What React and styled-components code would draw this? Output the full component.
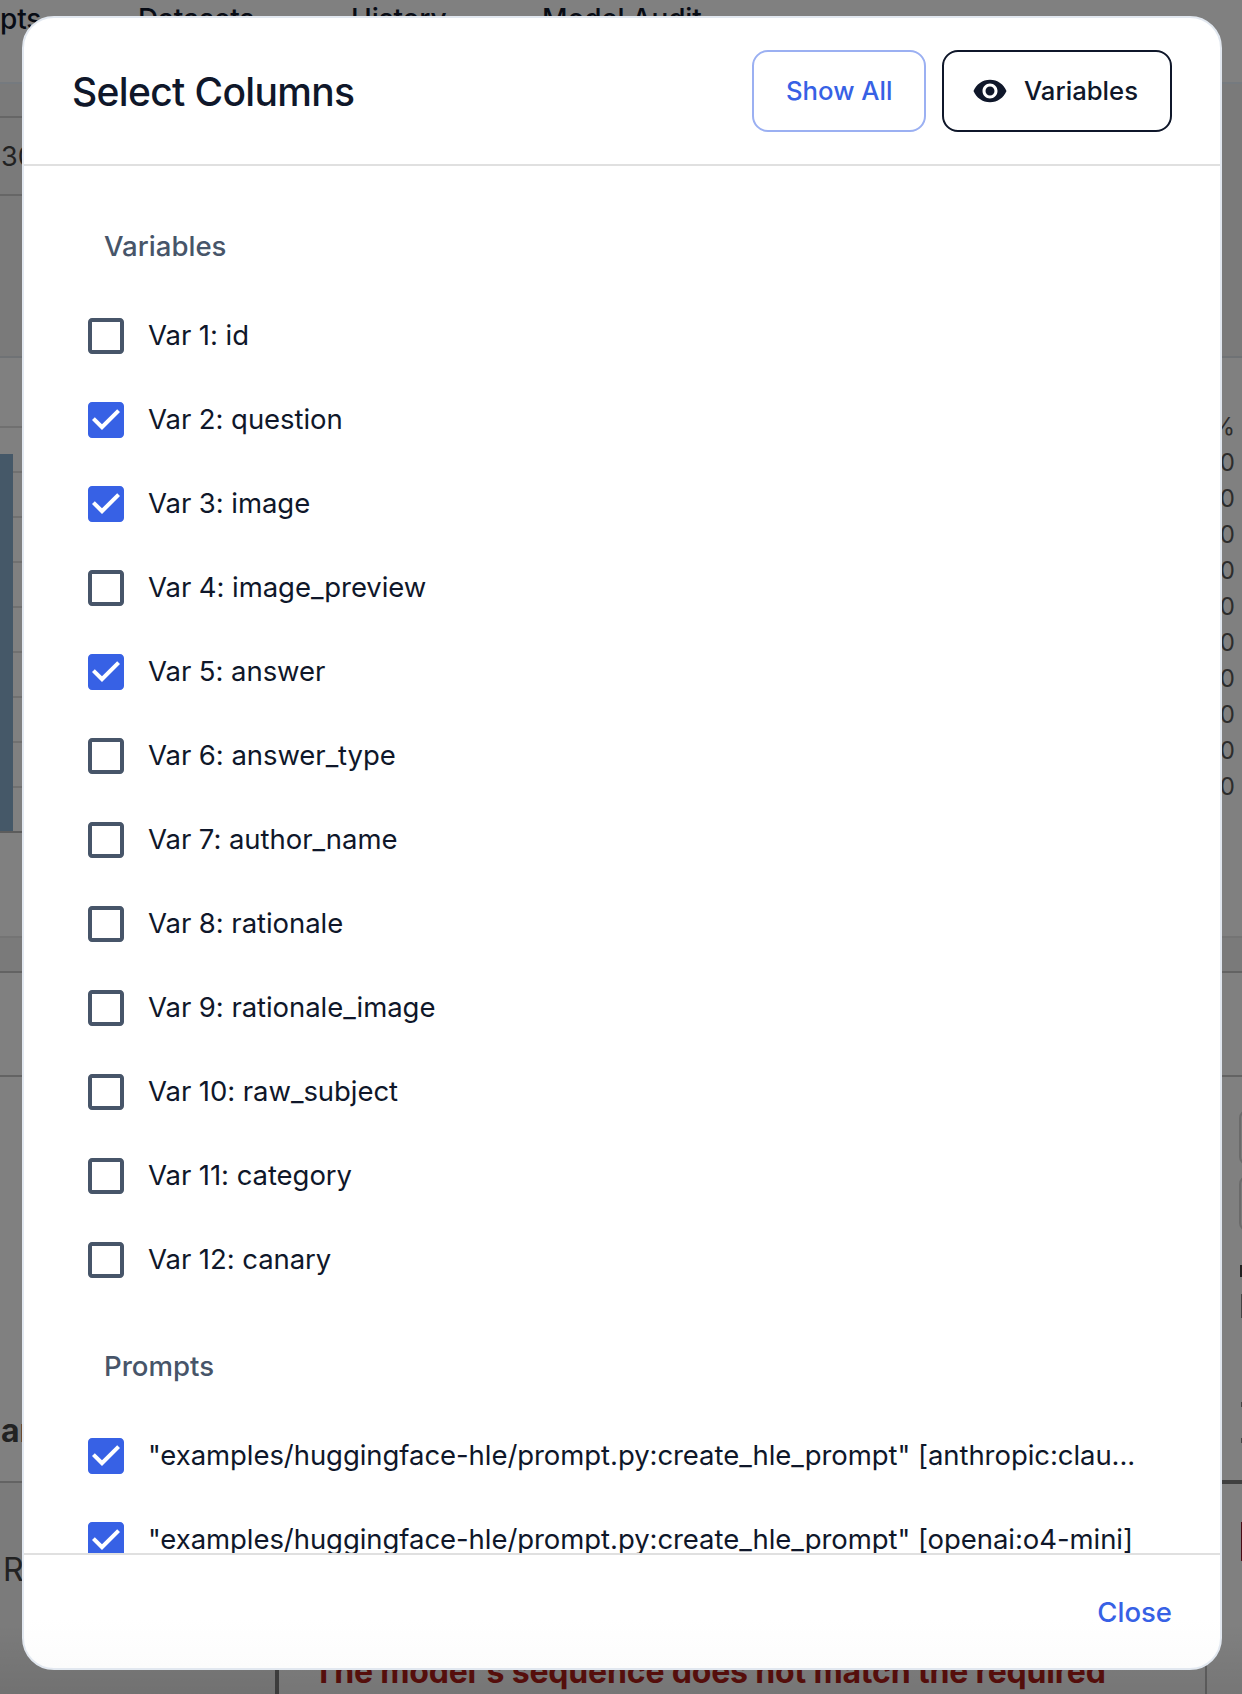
import React from "react";
import styled, { createGlobalStyle } from "styled-components";

const Global = createGlobalStyle`
  *, *::before, *::after { box-sizing: border-box; }
  body {
    margin: 0;
    background: #808080;
    font-family: Inter, "Liberation Sans", sans-serif;
    font-size: 28px;
    color: #0f172a;
  }
`;

const Screen = styled.div`
  position: relative;
  width: 1242px;
  height: 1694px;
  overflow: hidden;
  display: flex;
  align-items: center;
  justify-content: center;
`;

const Page = styled.div`
  position: absolute;
  inset: 0;
  display: flex;
  flex-direction: column;
  background: #808080;

  &::after {
    content: "";
    position: absolute;
    inset: auto 0 0;
    height: 70px;
    background: linear-gradient(transparent, rgba(0, 0, 0, 0.08));
  }
`;

const Nav = styled.nav`
  display: flex;
  align-items: flex-start;
  flex: none;
  height: 84px;
  padding-top: 2px;
  border-bottom: 2px solid #757a7f;
`;

const NavItem = styled.span`
  flex: none;
  width: ${(p) => p.$w}px;
  font-weight: 500;
  line-height: 34px;
  letter-spacing: -0.16px;
  color: #080c15;
`;

const Toolbar = styled.div`
  flex: none;
  height: 274px;
  padding-top: 32px;
  background: #7a7a7a;
  border-bottom: 2px solid #6f7275;
`;

const SelectField = styled.div`
  display: flex;
  align-items: center;
  width: 600px;
  height: 80px;
  padding: 1px 0 0 1px;
  border: solid #666;
  border-width: 2px 0;
  font-size: 27px;
  color: #222;
`;

const ChartPanel = styled.div`
  display: flex;
  justify-content: space-between;
  flex: none;
  height: 580px;
  border-bottom: 2px solid #747474;
`;

const Plot = styled.div`
  width: 600px;
  height: 475px;
  padding-top: 68px;
  border-bottom: 2px solid #5c5c5c;
`;

const PlotArea = styled.div`
  display: flex;
  align-items: flex-end;
  height: 405px;
  border-top: 2px solid #707070;
`;

const Bar = styled.div`
  width: 13px;
  height: 377px;
  background: #455868;
`;

const Grid = styled.div`
  flex: 1;
  height: 403px;
  background: repeating-linear-gradient(transparent 0 43px, #707070 43px 45px);
`;

const Axis = styled.div`
  display: flex;
  flex-direction: column;
  align-items: flex-end;
  padding: 51px 7px 0 0;
  font-size: 24px;
  line-height: 36px;
  color: #2c2c2c;
`;

const Gap = styled.div`
  height: 33px;
  flex: none;
  background: #7a7a7a;
`;

const Band = styled.div`
  display: flex;
  justify-content: space-between;
  flex: none;
  height: ${(p) => p.$h}px;
  border-top: 2px solid #636363;
`;

const RowLabel = styled.span`
  align-self: flex-end;
  padding: 0 0 30px 1px;
  font-size: 32px;
  font-weight: 700;
  line-height: 40px;
  color: #222;
`;

const EdgeColumn = styled.div`
  display: flex;
  flex-direction: column;
  width: 3px;
  padding-top: 33px;
  overflow: hidden;
`;

const EdgeButton = styled.i`
  flex: none;
  width: 60px;
  height: 55px;
  margin-bottom: 11px;
  border: 2px solid #6a6a6a;
  border-radius: 8px;
  background: #7b7b7b;
`;

const EdgeGlyph = styled.i`
  flex: none;
  align-self: flex-end;
  width: ${(p) => p.$w || 1}px;
  height: ${(p) => p.$h}px;
  margin-top: ${(p) => p.$gap}px;
  background: ${(p) => p.$bg};
`;

const LeftCell = styled.div`
  width: 275px;
  padding: 68px 0 0 3px;
  font-size: 32px;
  line-height: 38px;
  color: #222;
  background: #7b7b7b;
`;

const FailCell = styled.div`
  display: flex;
  align-items: flex-end;
  flex: 1;
  padding: 0 0 2px 34px;
  border: solid #404040;
  border-width: 0 0 0 4px;
  font-size: 32px;
  font-weight: 700;
  line-height: 40px;
  letter-spacing: -0.17px;
  white-space: nowrap;
  color: #5a0f0c;
`;

const RightCell = styled.div`
  display: flex;
  flex-direction: column;
  width: 37px;
  margin-top: -3px;
  border-top: 4px solid #404040;
  border-left: 2px solid #606060;
`;

const Dialog = styled.section`
  position: relative;
  display: flex;
  flex-direction: column;
  width: 1200px;
  height: 1654px;
  margin: 0 0 8px 2px;
  border: 2px solid #e2e8f0;
  border-radius: 32px;
  background: linear-gradient(#fff calc(100% - 50px), #fcfcfc);
  overflow: hidden;
`;

const Header = styled.header`
  display: flex;
  align-items: center;
  gap: 16px;
  flex: none;
  height: 148px;
  padding: 0 48px;
  border-bottom: 2px solid #e0e0e0;
`;

const Title = styled.h2`
  flex: 1;
  margin: 0;
  padding-top: 2px;
  font-size: 39px;
  font-weight: 500;
  line-height: 64px;
  letter-spacing: -0.65px;
`;

const OutlineButton = styled.button`
  display: flex;
  align-items: center;
  width: ${(p) => p.$w}px;
  height: 82px;
  padding: 0 0 0 ${(p) => p.$pad}px;
  gap: 16px;
  border: 2px solid ${(p) => p.$border};
  border-radius: 16px;
  background: transparent;
  color: ${(p) => p.$color};
  font: 500 25.7px/46px Inter, "Liberation Sans", sans-serif;
`;

const List = styled.div`
  flex: 1;
  min-height: 0;
  overflow: hidden;
  padding: 16px 48px 0;
`;

const Group = styled.div`
  padding-top: 16px;
`;

const GroupTitle = styled.h3`
  height: 96px;
  margin: 0;
  padding-left: 32px;
  font-size: 27.6px;
  font-weight: 500;
  line-height: 97px;
  color: #475569;
`;

const Option = styled.label`
  display: flex;
  align-items: center;
  gap: 18px;
  height: 84px;
  padding-left: 10px;
  font-size: 27.5px;
  line-height: 42px;
  letter-spacing: -0.06px;
  white-space: nowrap;
`;

const OptionText = styled.span`
  padding-bottom: 1.5px;
`;

const BoxIcon = styled.svg`
  width: 48px;
  height: 48px;
  flex: none;
  fill: ${(p) => (p.$on ? "#3761e5" : "#475569")};
`;

const Footer = styled.footer`
  display: flex;
  align-items: center;
  justify-content: flex-end;
  flex: none;
  height: 115px;
  padding: 2px 48px 0;
  border-top: 2px solid #e0e0e0;
`;

const CloseButton = styled.button`
  padding: 0;
  border: 0;
  background: none;
  color: #3761e5;
  font: 500 27.5px/49px Inter, "Liberation Sans", sans-serif;
`;

const variables = [
  ["id", false],
  ["question", true],
  ["image", true],
  ["image_preview", false],
  ["answer", true],
  ["answer_type", false],
  ["author_name", false],
  ["rationale", false],
  ["rationale_image", false],
  ["raw_subject", false],
  ["category", false],
  ["canary", false],
];

const prompts = [
  '"examples/huggingface-hle/prompt.py:create_hle_prompt" [anthropic:clau...',
  '"examples/huggingface-hle/prompt.py:create_hle_prompt" [openai:o4-mini]',
];

function CheckItem({ on, children }) {
  return (
    <Option>
      <BoxIcon viewBox="0 0 24 24" $on={on}>
        {on ? (
          <path d="M19 3H5c-1.11 0-2 .9-2 2v14c0 1.1.89 2 2 2h14c1.11 0 2-.9 2-2V5c0-1.1-.89-2-2-2zm-9 14l-5-5 1.41-1.41L10 14.17l7.59-7.59L19 8l-9 9z" />
        ) : (
          <path d="M19 5v14H5V5h14m0-2H5c-1.1 0-2 .9-2 2v14c0 1.1.9 2 2 2h14c1.1 0 2-.9 2-2V5c0-1.1-.9-2-2-2z" />
        )}
      </BoxIcon>
      <OptionText>{children}</OptionText>
    </Option>
  );
}

function Backdrop() {
  return (
    <Page>
      <Nav>
        <NavItem $w={138}>pts</NavItem>
        <NavItem $w={213}>Datasets</NavItem>
        <NavItem $w={191}>History</NavItem>
        <NavItem $w={200}>Model Audit</NavItem>
      </Nav>
      <Toolbar>
        <SelectField>30</SelectField>
      </Toolbar>
      <ChartPanel>
        <Plot>
          <PlotArea>
            <Bar />
            <Grid />
          </PlotArea>
        </Plot>
        <Axis>
          <span>%</span>
          {Array.from({ length: 10 }, (_, i) => (
            <span key={i}>0</span>
          ))}
        </Axis>
      </ChartPanel>
      <Gap />
      <Band $h={104} />
      <Band $h={406}>
        <RowLabel>ar</RowLabel>
        <EdgeColumn>
          <EdgeButton />
          <EdgeButton />
          <EdgeGlyph $h={12} $gap={23} $bg="#222" $w={2} />
          <EdgeGlyph $h={24} $gap={17} $bg="#444" />
          <EdgeGlyph $h={5} $gap={84} $bg="#444" />
          <EdgeGlyph $h={5} $gap={31} $bg="#444" />
        </EdgeColumn>
      </Band>
      <Band $h={213}>
        <LeftCell>R</LeftCell>
        <FailCell>The model's sequence does not match the required</FailCell>
        <RightCell>
          <EdgeGlyph $h={39} $gap={38} $bg="#4a0a14" />
        </RightCell>
      </Band>
    </Page>
  );
}

export default function App() {
  return (
    <Screen>
      <Global />
      <Backdrop />
      <Dialog>
        <Header>
          <Title>Select Columns</Title>
          <OutlineButton $w={174} $pad={32} $border="#9bb0f2" $color="#3761e5">Show All</OutlineButton>
          <OutlineButton $w={230} $pad={28} $border="#0f172a" $color="#0f172a">
            <svg width="36" height="36" viewBox="0 0 24 24" fill="currentColor">
              <path d="M12 4.5C7 4.5 2.73 7.61 1 12c1.73 4.39 6 7.5 11 7.5s9.27-3.11 11-7.5c-1.73-4.39-6-7.5-11-7.5M12 17c-2.76 0-5-2.24-5-5s2.24-5 5-5 5 2.24 5 5-2.24 5-5 5m0-8c-1.66 0-3 1.34-3 3s1.34 3 3 3 3-1.34 3-3-1.34-3-3-3" />
            </svg>
            Variables
          </OutlineButton>
        </Header>
        <List>
          <Group>
            <GroupTitle>Variables</GroupTitle>
            {variables.map(([name, on], i) => (
              <CheckItem key={name} on={on}>{`Var ${i + 1}: ${name}`}</CheckItem>
            ))}
          </Group>
          <Group>
            <GroupTitle>Prompts</GroupTitle>
            {prompts.map((text) => (
              <CheckItem key={text} on>{text}</CheckItem>
            ))}
          </Group>
        </List>
        <Footer>
          <CloseButton>Close</CloseButton>
        </Footer>
      </Dialog>
    </Screen>
  );
}
